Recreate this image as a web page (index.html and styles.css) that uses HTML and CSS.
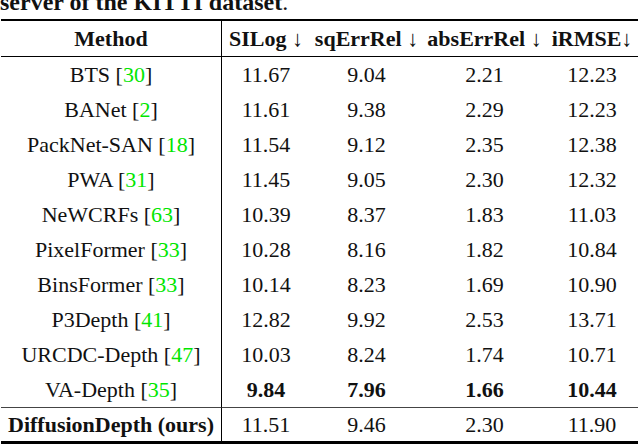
FILE: index.html
```html
<!DOCTYPE html>
<html lang="en">
<head>
    <meta charset="UTF-8">
    <meta name="viewport" content="width=device-width, initial-scale=1.0">
    <title>KITTI Online Benchmark</title>
    <link rel="stylesheet" href="styles.css">
</head>
<body>
    <p class="caption">server of the KITTI dataset<span class="dot">.</span></p>

    <table class="results">
        <colgroup>
            <col class="col-method">
            <col class="col-silog">
            <col class="col-sq">
            <col class="col-abs">
            <col class="col-irmse">
        </colgroup>
        <thead>
            <tr>
                <th class="method">Method</th>
                <th>SILog <span class="arrow">&darr;</span></th>
                <th>sqErrRel <span class="arrow">&darr;</span></th>
                <th>absErrRel <span class="arrow">&darr;</span></th>
                <th>iRMSE<span class="arrow">&darr;</span></th>
            </tr>
        </thead>
        <tbody>
            <tr>
                <td class="method">BTS [<span class="cite">30</span>]</td>
                <td>11.67</td><td>9.04</td><td>2.21</td><td>12.23</td>
            </tr>
            <tr>
                <td class="method">BANet [<span class="cite">2</span>]</td>
                <td>11.61</td><td>9.38</td><td>2.29</td><td>12.23</td>
            </tr>
            <tr>
                <td class="method">PackNet-SAN [<span class="cite">18</span>]</td>
                <td>11.54</td><td>9.12</td><td>2.35</td><td>12.38</td>
            </tr>
            <tr>
                <td class="method">PWA [<span class="cite">31</span>]</td>
                <td>11.45</td><td>9.05</td><td>2.30</td><td>12.32</td>
            </tr>
            <tr>
                <td class="method">NeWCRFs [<span class="cite">63</span>]</td>
                <td>10.39</td><td>8.37</td><td>1.83</td><td>11.03</td>
            </tr>
            <tr>
                <td class="method">PixelFormer [<span class="cite">33</span>]</td>
                <td>10.28</td><td>8.16</td><td>1.82</td><td>10.84</td>
            </tr>
            <tr>
                <td class="method">BinsFormer [<span class="cite">33</span>]</td>
                <td>10.14</td><td>8.23</td><td>1.69</td><td>10.90</td>
            </tr>
            <tr>
                <td class="method">P3Depth [<span class="cite">41</span>]</td>
                <td>12.82</td><td>9.92</td><td>2.53</td><td>13.71</td>
            </tr>
            <tr>
                <td class="method">URCDC-Depth [<span class="cite">47</span>]</td>
                <td>10.03</td><td>8.24</td><td>1.74</td><td>10.71</td>
            </tr>
            <tr>
                <td class="method">VA-Depth [<span class="cite">35</span>]</td>
                <td class="best">9.84</td><td class="best">7.96</td><td class="best">1.66</td><td class="best">10.44</td>
            </tr>
            <tr class="ours">
                <td class="method"><b>DiffusionDepth (ours)</b></td>
                <td>11.51</td><td>9.46</td><td>2.30</td><td>11.90</td>
            </tr>
        </tbody>
    </table>
</body>
</html>
```

FILE: styles.css
```css
* {
    margin: 0;
    padding: 0;
    box-sizing: border-box;
}

body {
    background-color: #fff;
    color: #111;
    font-family: "Liberation Serif", "Times New Roman", serif;
    width: 640px;
    height: 448px;
    overflow: hidden;
}

.caption {
    font-size: 24px;
    font-weight: bold;
    line-height: 24px;
    margin-top: -10px;
    margin-bottom: 5px;
    white-space: nowrap;
}

.caption .dot {
    font-weight: normal;
}

.results {
    border-collapse: separate;
    border-spacing: 0;
    table-layout: fixed;
    width: 637px;
    margin-left: 1px;
    font-size: 22px;
}

.col-method { width: 221px; }
.col-silog { width: 88px; }
.col-sq { width: 113px; }
.col-abs { width: 123px; }
.col-irmse { width: 92px; }

.results th,
.results td {
    text-align: center;
    vertical-align: middle;
    line-height: 35px;
    white-space: nowrap;
    padding: 0;
}

.results th {
    font-weight: bold;
    border-top: 2px solid #000;
    border-bottom: 1px solid #000;
}

.results .method {
    border-right: 1px solid #000;
}

.arrow {
    font-weight: normal;
}

.cite {
    color: #00e600;
}

.best {
    font-weight: bold;
}

.ours td {
    line-height: 33px;
    border-top: 1px solid #444;
    border-bottom: 3px solid #000;
}
```
